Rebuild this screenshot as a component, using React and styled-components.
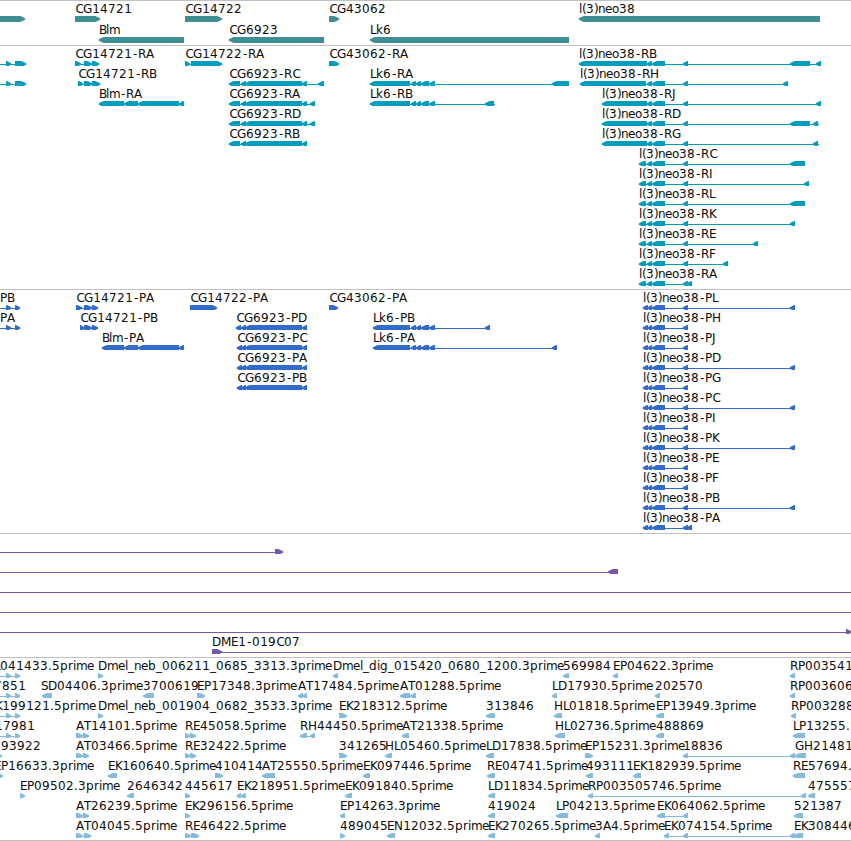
import React from "react";
import styled, { createGlobalStyle } from "styled-components";

const GlobalStyle = createGlobalStyle`
  html, body {
    margin: 0;
    background: #ffffff;
  }
`;

const Browser = styled.main`
  display: flex;
  flex-direction: column;
  width: 851px;
  height: 841px;
  box-sizing: border-box;
  overflow: hidden;
  background: #ffffff;
  border-bottom: 1px solid #c0c0c0;
`;

const Track = styled.section`
  display: flex;
  flex-direction: column;
  border-top: 1px solid #c0c0c0;
  padding-bottom: ${(props) => props.$gap}px;
  color: ${(props) => props.$color};
`;

const Row = styled.svg`
  display: block;
  flex: none;
  width: 851px;
  height: ${(props) => props.$height}px;
  overflow: hidden;
`;

const Label = styled.text`
  font-family: "DejaVu Sans", Verdana, sans-serif;
  font-size: 12px;
  fill: #0c0c0c;
`;

const Shape = styled.path`
  fill: currentColor;
`;

/* Whole-pixel advances of the label font */
const ADVANCE = {
  G: 9, D: 9, H: 9, N: 9, M: 10, B: 7, E: 7, P: 7, K: 7, S: 7, T: 7, F: 7,
  L: 6, J: 4, I: 3, l: 3, i: 3, r: 5, m: 11, e: 7, k: 7, n: 7, o: 7, "(": 4,
  ")": 4, "-": 6, _: 6, ".": 4,
};

/* Side bearing for glyphs that are narrower than their cell */
const NUDGE = { "-": 0.9, C: 0.4, "1": 0.3 };

const glyphPositions = (text, start) => {
  const positions = [];
  let x = start;
  for (const char of text) {
    positions.push(x + (NUDGE[char] || 0));
    x += ADVANCE[char] || 8;
  }
  return positions.join(" ");
};

const BAR = 15;
const HEAD = 5;

// An exon is a 6px bar with a tapered head on the side of its strand
const exonPath = (from, to, dir) => {
  const head = Math.min(HEAD, to - from - 0.5);
  const side = dir === "r" ? 1 : -1;
  const base = dir === "r" ? from : to;
  const tip = dir === "r" ? to + 0.3 : from - 0.3;
  const shoulder = tip - side * head;
  const middle = tip - side * head * 0.45;
  return [
    `M${base} ${BAR}`,
    `H${shoulder}`,
    `L${middle} ${BAR + 1.2}`,
    `L${tip} ${BAR + 2.4}`,
    `V${BAR + 3.6}`,
    `L${middle} ${BAR + 4.8}`,
    `L${shoulder} ${BAR + 6}`,
    `H${base}Z`,
  ].join("");
};

// f(label, strand, exons, [line start, line end], label x)
const f = (label, dir, exons, line, x) => ({ label, dir, exons, line, x });

const genes = [
  [
    f("", "r", [[-10, 25]]),
    f("CG14721", "r", [[75, 100]]),
    f("CG14722", "r", [[185, 222]]),
    f("CG43062", "r", [[329, 339]]),
    f("l(3)neo38", "l", [[579, 820]]),
  ],
  [
    f("Blm", "l", [[99, 184]]),
    f("CG6923", "l", [[229, 324]]),
    f("Lk6", "l", [[370, 569]]),
  ],
];

const cg6923 = [[241, 246], [245, 302], [302, 307]];
const lk6 = [[411, 416], [416, 421], [421, 429], [429, 435]];
const neo = [[647, 652], [652, 665], [683, 688]];
const neoP = [[643, 648], [648, 652], [652, 665], [683, 688]];

const transcripts = [
  [
    f("", "r", [[6, 11], [15, 26]], [0, 26]),
    f("CG14721-RA", "r", [[75, 81], [84, 92], [92, 99]]),
    f("CG14722-RA", "r", [[185, 190], [191, 222]]),
    f("CG43062-RA", "r", [[329, 339]]),
    f("l(3)neo38-RB", "l", [[579, 647], ...neo, [790, 810], [816, 821]]),
  ],
  [
    f("", "r", [[6, 11], [15, 26]], [0, 26]),
    f("CG14721-RB", "r", [[78, 83], [84, 92], [92, 100]]),
    f("CG6923-RC", "l", [[229, 240], ...cg6923, [318, 324]]),
    f("Lk6-RA", "l", [[370, 410], ...lk6, [552, 569]]),
    f("l(3)neo38-RH", "l", [[580, 646], ...neo, [783, 788]]),
  ],
  [
    f("Blm-RA", "l", [[99, 124], [124, 138], [138, 179], [179, 184]]),
    f("CG6923-RA", "l", [[229, 240], ...cg6923, [310, 315]]),
    f("Lk6-RB", "l", [[370, 410], ...lk6, [485, 494]], [370, 495]),
    f("l(3)neo38-RJ", "l", [[602, 647], ...neo, [816, 821]]),
  ],
  [
    f("CG6923-RD", "l", [[229, 240], ...cg6923, [310, 315]]),
    f("l(3)neo38-RD", "l", [[602, 647], ...neo, [790, 810], [813, 818]], [602, 819]),
  ],
  [
    f("CG6923-RB", "l", [[229, 240], ...cg6923]),
    f("l(3)neo38-RG", "l", [[602, 647], ...neo, [813, 818]], [602, 819]),
  ],
  [f("l(3)neo38-RC", "l", [[639, 646], ...neo, [790, 805]])],
  [f("l(3)neo38-RI", "l", [[639, 646], ...neo, [804, 809]])],
  [f("l(3)neo38-RL", "l", [[639, 646], ...neo, [790, 805]])],
  [f("l(3)neo38-RK", "l", [[639, 646], ...neo, [790, 795]])],
  [f("l(3)neo38-RE", "l", [[639, 646], ...neo, [753, 758]])],
  [f("l(3)neo38-RF", "l", [[639, 646], ...neo, [723, 728]])],
  [f("l(3)neo38-RA", "l", [[639, 646], ...neo, [687, 692]])],
];

const proteins = [
  [
    f("PB", "r", [[6, 11], [15, 20]], [0, 20], 0),
    f("CG14721-PA", "r", [[76, 82], [84, 92], [92, 98]]),
    f("CG14722-PA", "r", [[190, 217]]),
    f("CG43062-PA", "r", [[329, 338]]),
    f("l(3)neo38-PL", "l", [...neoP, [790, 795]]),
  ],
  [
    f("PA", "r", [[6, 11], [15, 20]], [0, 20], 0),
    f("CG14721-PB", "r", [[80, 84], [84, 92], [92, 98]]),
    f("CG6923-PD", "l", [[236, 241], ...cg6923]),
    f("Lk6-PB", "l", [[373, 410], ...lk6, [485, 490]]),
    f("l(3)neo38-PH", "l", neoP),
  ],
  [
    f("Blm-PA", "l", [[102, 124], [124, 138], [138, 179], [179, 184]]),
    f("CG6923-PC", "l", [[237, 242], ...cg6923]),
    f("Lk6-PA", "l", [[373, 410], ...lk6, [552, 557]]),
    f("l(3)neo38-PJ", "l", neoP),
  ],
  [
    f("CG6923-PA", "l", [[237, 242], ...cg6923]),
    f("l(3)neo38-PD", "l", [...neoP, [790, 795]]),
  ],
  [
    f("CG6923-PB", "l", [[237, 242], ...cg6923]),
    f("l(3)neo38-PG", "l", neoP),
  ],
  [f("l(3)neo38-PC", "l", [...neoP, [790, 795]])],
  [f("l(3)neo38-PI", "l", neoP)],
  [f("l(3)neo38-PK", "l", [...neoP, [790, 795]])],
  [f("l(3)neo38-PE", "l", neoP)],
  [f("l(3)neo38-PF", "l", neoP)],
  [f("l(3)neo38-PB", "l", [...neoP, [790, 795]])],
  [f("l(3)neo38-PA", "l", [...neoP, [687, 692]])],
];

const clones = [
  [f("", "r", [[275, 283]], [0, 283])],
  [f("", "l", [[608, 618]], [0, 618])],
  [f("", "r", [], [0, 851])],
  [f("", "r", [], [0, 851])],
  [f("", "r", [[846, 851]], [0, 851])],
  [f("DME1-019C07", "r", [[212, 222]], [212, 851])],
];

const ests = [
  [
    f("L041433.5prime", "r", [[6, 11], [15, 20]], [0, 20], -6),
    f("Dmel_neb_006211_0685_3313.3prime", "r", [[98, 103]]),
    f("Dmel_dig_015420_0680_1200.3prime", "l", [[333, 338]]),
    f("569984", "l", [[563, 569]]),
    f("EP04622.3prime", "l", [[613, 618]]),
    f("RP003541", "l", [[790, 795]]),
  ],
  [
    f("7851", "r", [[6, 11], [15, 20]], [0, 20], -6),
    f("SD04406.3prime", "l", [[42, 52]], null, 41),
    f("3700619", "l", [[143, 154]]),
    f("EP17348.3prime", "r", [[197, 205]]),
    f("AT17484.5prime", "l", [[298, 303], [303, 307]]),
    f("AT01288.5prime", "l", [[400, 410], [410, 416]]),
    f("LD17930.5prime", "l", [[552, 557]]),
    f("202570", "l", [[655, 660]]),
    f("RP003606", "l", [[790, 795]]),
  ],
  [
    f("EK199121.5prime", "r", [[6, 11], [15, 20]], [0, 20], -12),
    f("Dmel_neb_001904_0682_3533.3prime", "r", [[98, 103]]),
    f("EK218312.5prime", "r", [[339, 347]]),
    f("313846", "l", [[486, 495]]),
    f("HL01818.5prime", "l", [[554, 562]]),
    f("EP13949.3prime", "l", [[656, 664]]),
    f("RP003288", "l", [[791, 796]]),
  ],
  [
    f("17981", "r", [[6, 11], [15, 20]], [0, 20], -5),
    f("AT14101.5prime", "r", [[76, 83], [83, 89]]),
    f("RE45058.5prime", "r", [[185, 190], [190, 196]]),
    f("RH44450.5prime", "l", [[300, 307], [310, 315]]),
    f("AT21338.5prime", "l", [[402, 409]]),
    f("HL02736.5prime", "l", [[555, 565]]),
    f("488869", "l", [[656, 664]]),
    f("LP13255.5prime", "l", [[793, 805]]),
  ],
  [
    f("-93922", "r", [[-3, 2]], null, -5),
    f("AT03466.5prime", "r", [[76, 83], [83, 89]]),
    f("RE32422.5prime", "r", [[185, 190], [190, 196]]),
    f("341265", "r", [[339, 347]]),
    f("HL05460.5prime", "l", [[385, 392]]),
    f("LD17838.5prime", "l", [[486, 494]]),
    f("EP15231.3prime", "r", [[585, 593]]),
    f("18836", "l", [[683, 688], [790, 795]]),
    f("GH21481.5prime", "l", [[795, 806]]),
  ],
  [
    f("EP16633.3prime", "r", [[-2, 3]], null, -6),
    f("EK160640.5prime", "l", [[108, 117]]),
    f("410414", "r", [[215, 223]]),
    f("AT25550.5prime", "l", [[262, 275]]),
    f("EK097446.5prime", "l", [[363, 370]]),
    f("RE04741.5prime", "l", [[487, 495]]),
    f("493111", "l", [[586, 593]]),
    f("EK182939.5prime", "l", [[633, 641]]),
    f("RE57694.5prime", "l", [[793, 805]]),
  ],
  [
    f("EP09502.3prime", "r", [[20, 25]]),
    f("2646342", "l", [[127, 134]]),
    f("445617", "r", [[185, 190]]),
    f("EK218951.5prime", "l", [[237, 241], [241, 246]]),
    f("EK091840.5prime", "l", [[345, 352]]),
    f("LD11834.5prime", "l", [[488, 495]]),
    f("RP003505746.5prime", "l", [[588, 593], [801, 806]]),
    f("475557", "l", [[808, 815]]),
  ],
  [
    f("AT26239.5prime", "r", [[76, 83], [83, 89]]),
    f("EK296156.5prime", "r", [[185, 190]]),
    f("EP14263.3prime", "l", [[340, 345]]),
    f("419024", "l", [[488, 495]]),
    f("LP04213.5prime", "l", [[556, 568]]),
    f("EK064062.5prime", "l", [[657, 665], [683, 688]]),
    f("521387", "l", [[794, 803]]),
  ],
  [
    f("AT04045.5prime", "r", [[76, 83], [84, 91]]),
    f("RE46422.5prime", "r", [[185, 191], [191, 199]]),
    f("489045", "r", [[340, 345]]),
    f("EN12032.5prime", "l", [[387, 395]]),
    f("EK270265.5prime", "l", [[488, 495]]),
    f("3A4.5prime", "l", [[595, 600]]),
    f("EK074154.5prime", "l", [[664, 669], [683, 688], [790, 795]]),
    f("EK308446", "l", [[794, 803]]),
  ],
];

const tracks = [
  { id: "gene", color: "#3f8e93", rowHeight: 21, gap: 2, rows: genes },
  { id: "transcript", color: "#009dbf", rowHeight: 20, gap: 3, rows: transcripts },
  { id: "protein", color: "#316ccc", rowHeight: 20, gap: 3, rows: proteins },
  { id: "clone", color: "#7659a9", rowHeight: 20, gap: 3, rows: clones },
  { id: "est", color: "#87bbdc", rowHeight: 20, gap: 2, rows: ests },
];

const Feature = ({ feature }) => {
  const { label, dir, exons, line, x } = feature;
  const [from, to] = line || [exons[0][0], exons[exons.length - 1][1]];
  const labelX = x ?? from;

  return (
    <g>
      {(line || exons.length > 1) && (
        <Shape d={`M${from} ${BAR + 3}H${to}v1H${from}Z`} />
      )}
      {exons.map(([a, b]) => (
        <Shape key={a} d={exonPath(a, b, dir)} />
      ))}
      {label && (
        <Label x={glyphPositions(label, labelX)} y={12}>
          {label}
        </Label>
      )}
    </g>
  );
};

const App = () => (
  <>
    <GlobalStyle />
    <Browser>
      {tracks.map((track) => (
        <Track key={track.id} $color={track.color} $gap={track.gap}>
          {track.rows.map((row, index) => (
            <Row key={index} $height={track.rowHeight}>
              {row.map((feature, i) => (
                <Feature key={i} feature={feature} />
              ))}
            </Row>
          ))}
        </Track>
      ))}
    </Browser>
  </>
);

export default App;
